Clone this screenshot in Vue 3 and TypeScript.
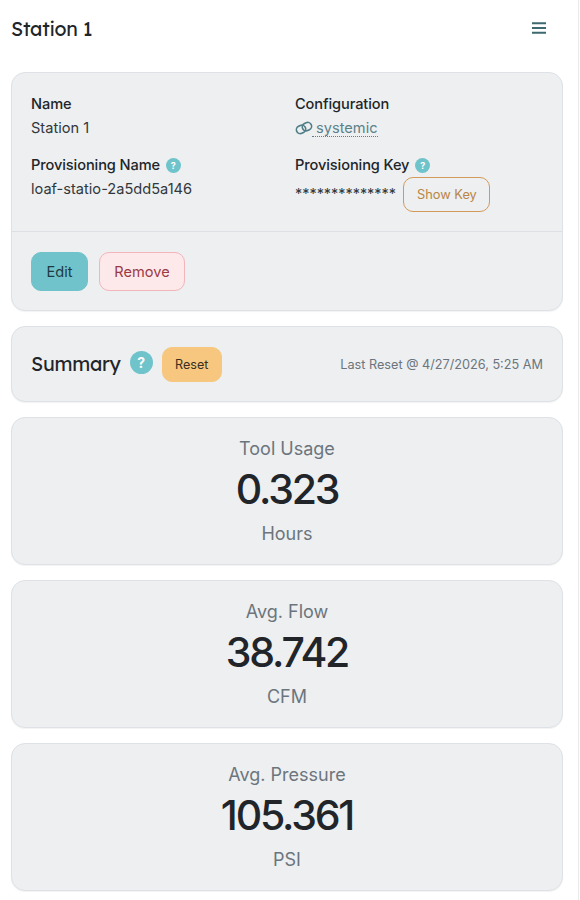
<script setup lang="ts">
const stats = [
  { label: 'Tool Usage', value: '0.323', unit: 'Hours' },
  { label: 'Avg. Flow', value: '38.742', unit: 'CFM' },
  { label: 'Avg. Pressure', value: '105.361', unit: 'PSI' },
]
</script>

<template>
  <div class="page">
    <header class="top">
      <h1>Station 1</h1>
      <svg class="menu" width="14" height="12" viewBox="0 0 14 12" aria-label="Menu">
        <path d="M0 1.2h14M0 6h14M0 10.8h14" stroke="#3c6a70" stroke-width="1.9" fill="none" />
      </svg>
    </header>

    <section class="card info">
      <div class="fields">
        <div class="field">
          <div class="label">Name</div>
          <div class="val">Station 1</div>
        </div>
        <div class="field">
          <div class="label">Configuration</div>
          <a class="link">
            <svg class="chain" width="18" height="14" viewBox="0 0 18 14" fill="none" stroke="#4f7d85" stroke-width="1.6">
              <g transform="rotate(-25 9 7)">
                <rect x="1" y="3.2" width="9.5" height="7.6" rx="3.8" />
                <rect x="7.5" y="3.2" width="9.5" height="7.6" rx="3.8" />
              </g>
            </svg><span class="link-text"> systemic</span>
          </a>
        </div>
        <div class="field">
          <div class="label">Provisioning Name <span class="q small">?</span></div>
          <div class="val">loaf-statio-2a5dd5a146</div>
        </div>
        <div class="field">
          <div class="label">Provisioning Key <span class="q small">?</span></div>
          <div class="key">
            <span class="stars">**************</span>
            <button class="btn-key">Show Key</button>
          </div>
        </div>
      </div>
      <div class="actions">
        <button class="btn edit">Edit</button>
        <button class="btn remove">Remove</button>
      </div>
    </section>

    <section class="card summary">
      <div class="sum-left">
        <h2>Summary</h2>
        <span class="q big">?</span>
        <button class="reset">Reset</button>
      </div>
      <span class="last">Last Reset @ 4/27/2026, 5:25 AM</span>
    </section>

    <section v-for="s in stats" :key="s.label" class="card stat">
      <div class="stat-label">{{ s.label }}</div>
      <div class="stat-value">{{ s.value }}</div>
      <div class="stat-label">{{ s.unit }}</div>
    </section>
  </div>
</template>

<style scoped>
.page {
  box-sizing: border-box;
  width: 579px;
  height: 900px;
  overflow: hidden;
  padding: 0 15px 0 11px;
  border-right: 1px solid #e9eaec;
  background: #fff;
  font-family: Inter, "Liberation Sans", sans-serif;
  color: #212529;
}
.top {
  display: flex;
  align-items: center;
  justify-content: space-between;
  height: 56px;
  margin-bottom: 16px;
  padding-right: 17px;
}
h1 {
  margin: 0;
  font-family: Lexend, Roboto, sans-serif;
  font-size: 19.5px;
  font-weight: 450;
  letter-spacing: -0.25px;
  color: #212529;
}
.menu { display: block; }
.card {
  box-sizing: border-box;
  background: #edeff1;
  border: 1px solid #dee2e6;
  border-radius: 14px;
  margin-bottom: 15px;
  box-shadow: 0 1px 1px rgba(0, 0, 0, 0.05);
}
.info { height: 239px; display: flex; flex-direction: column; }
.fields {
  flex: none;
  display: grid;
  grid-template-columns: 264px 1fr;
  row-gap: 14px;
  padding: 20px 19px 0;
  height: 159px;
  box-sizing: border-box;
  border-bottom: 1px solid #dcdfe3;
  align-content: start;
}
.field { font-size: 14.6px; line-height: 23px; }
.label { font-weight: 500; color: #212529; letter-spacing: -0.1px; }
.val { color: #32373c; line-height: 24px; }
.q {
  display: inline-flex;
  align-items: center;
  justify-content: center;
  border-radius: 50%;
  background: #6fc3ca;
  color: #fff;
  font-weight: 700;
}
.q.small { width: 15px; height: 15px; font-size: 9px; margin-left: 2px; vertical-align: 1px; }
.q.big { width: 23px; height: 23px; font-size: 14px; margin-top: -3px; }
.link { display: flex; align-items: center; height: 24px; width: fit-content; color: #5a8189; }
.chain { display: block; flex: none; margin-right: -1px; }
.link-text {
  white-space: pre;
  border-bottom: 1px dotted #5a8189;
  line-height: 16px;
}
.key { display: flex; align-items: flex-start; gap: 7.5px; height: 34px; }
.stars { font-size: 14.4px; color: #32373c; line-height: 23px; margin-top: 5px; }
.btn-key {
  box-sizing: border-box;
  width: 87px;
  height: 35px;
  background: transparent;
  border: 1px solid #d29a5a;
  border-radius: 10px;
  color: #b98546;
  font: 400 12.8px Inter, sans-serif;
}
.actions { display: flex; gap: 11px; padding: 20px 19px 19px; }
.btn {
  box-sizing: border-box;
  height: 39px;
  border-radius: 10px;
  font: 400 14.6px Inter, sans-serif;
}
.edit { width: 57px; background: #70c3ca; border: 1px solid #70c3ca; color: #1d3a3f; }
.remove { width: 86px; background: #fde8ea; border: 1px solid #f1b5bb; color: #9a3a44; }
.summary {
  height: 76px;
  display: flex;
  align-items: center;
  justify-content: space-between;
  padding: 0 19px;
}
.sum-left { display: flex; align-items: center; }
h2 {
  margin: -2px 9px 0 0;
  font-family: Lexend, Roboto, sans-serif;
  font-size: 19.5px;
  font-weight: 450;
  letter-spacing: -0.25px;
}
.reset {
  box-sizing: border-box;
  width: 60px;
  height: 35px;
  margin-left: 9px;
  background: #f7c77f;
  border: 1px solid #f7c77f;
  border-radius: 10px;
  color: #3a2f1f;
  font: 400 12.6px Inter, sans-serif;
}
.last { font-size: 12.7px; color: #6c757d; }
.stat {
  height: 148px;
  display: flex;
  flex-direction: column;
  align-items: center;
  padding-top: 19px;
}
.stat-label { font-size: 18px; line-height: 24px; color: #6c757d; }
.stat-value {
  font-family: Inter, sans-serif;
  font-size: 41px;
  font-weight: 550;
  letter-spacing: -2.2px;
  line-height: 50px;
  margin: 3px 0 8px;
  color: #212529;
}
</style>
